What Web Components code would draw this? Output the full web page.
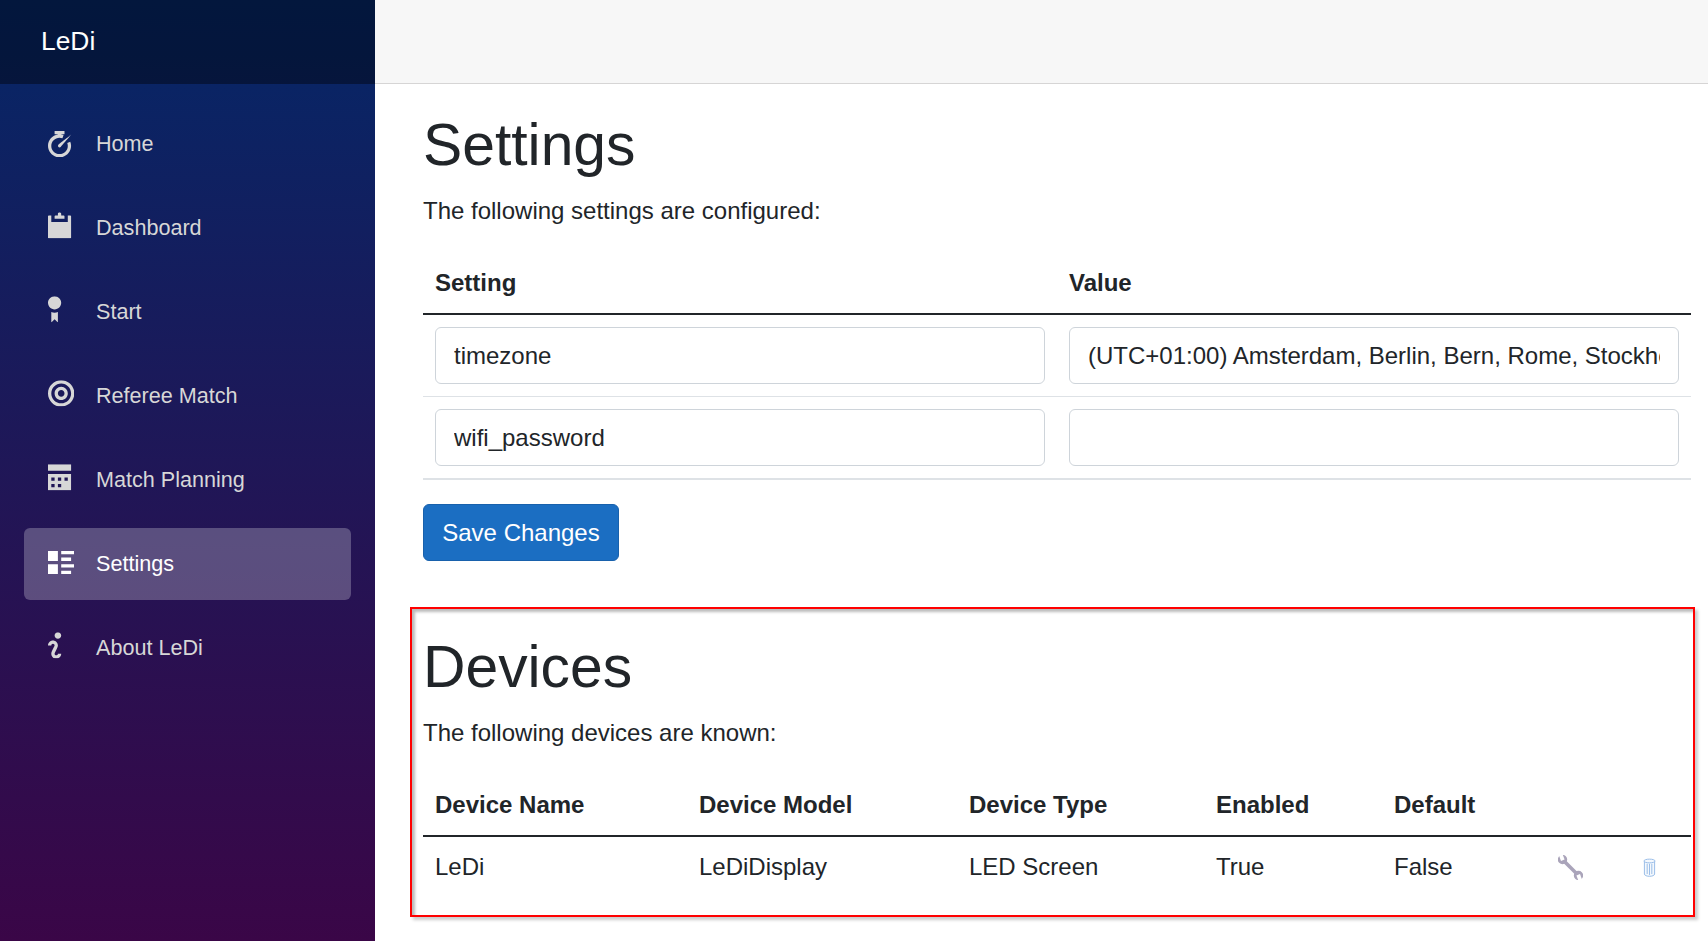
<!DOCTYPE html>
<html>
<head>
<meta charset="utf-8">
<title>LeDi</title>
<style>
    html, body { margin: 0; height: 100%; }
    body { font: 24px/1.5 "Liberation Sans", Arial, sans-serif; color: #212529; overflow: hidden; }
</style>
</head>
<body>

<app-shell>
    <nav-menu slot="nav" brand="LeDi">
        <nav-link icon="timer" low>Home</nav-link>
        <nav-link icon="clipboard">Dashboard</nav-link>
        <nav-link icon="badge">Start</nav-link>
        <nav-link icon="target">Referee Match</nav-link>
        <nav-link icon="calendar">Match Planning</nav-link>
        <nav-link icon="list" low active>Settings</nav-link>
        <nav-link icon="info">About LeDi</nav-link>
    </nav-menu>

    <page-section heading="Settings" intro="The following settings are configured:">
        <settings-table></settings-table>
        <save-button>Save Changes</save-button>
    </page-section>

    <marked-box>
        <page-section heading="Devices" intro="The following devices are known:">
            <devices-table></devices-table>
        </page-section>
    </marked-box>
</app-shell>

<script>

    const ICONS = {
        timer: 'M2 0v1h1v.03c-1.7.24-3 1.71-3 3.47 0 1.93 1.57 3.5 3.5 3.5s3.5-1.57 3.5-3.5c0-.45-.1-.87-.25-1.25l-.91.38c.11.29.16.57.16.88 0 1.39-1.11 2.5-2.5 2.5s-2.5-1.11-2.5-2.5 1.11-2.5 2.5-2.5c.3 0 .59.05.88.16l.34-.94c-.23-.08-.47-.12-.72-.16v-.06h1v-1h-3zm5 1.16s-3.65 2.81-3.84 3c-.19.2-.19.49 0 .69.19.2.49.2.69 0 .2-.2 3.16-3.69 3.16-3.69z',
        clipboard: 'M3.5 0c-.28 0-.5.22-.5.5v.5h-.75c-.14 0-.25.11-.25.25v.75h3v-.75c0-.14-.11-.25-.25-.25h-.75v-.5c0-.28-.22-.5-.5-.5zm-3.25 1c-.14 0-.25.11-.25.25v6.5c0 .14.11.25.25.25h6.5c.14 0 .25-.11.25-.25v-6.5c0-.14-.11-.25-.25-.25h-.75v2h-5v-2h-.75z',
        badge: 'M2 0c-1.1 0-2 .9-2 2s.9 2 2 2 2-.9 2-2-.9-2-2-2zm-1 4.81v3.19l1-1 1 1v-3.19c-.31.11-.65.19-1 .19s-.69-.08-1-.19z',
        target: 'M4 0c-2.2 0-4 1.8-4 4s1.8 4 4 4 4-1.8 4-4-1.8-4-4-4zm0 1c1.66 0 3 1.34 3 3s-1.34 3-3 3-3-1.34-3-3 1.34-3 3-3zm0 1c-1.1 0-2 .9-2 2s.9 2 2 2 2-.9 2-2-.9-2-2-2zm0 1c.56 0 1 .44 1 1s-.44 1-1 1-1-.44-1-1 .44-1 1-1z',
        calendar: 'M0 0v2h7v-2h-7zm0 3v4.910c0 .05.04.09.09.09h6.810c.05 0 .09-.04.09-.09v-4.910h-7zm1 1h1v1h-1v-1zm2 0h1v1h-1v-1zm2 0h1v1h-1v-1zm-4 2h1v1h-1v-1zm2 0h1v1h-1v-1z',
        list: 'M0 0v3h3v-3h-3zm4 0v1h4v-1h-4zm0 2v1h3v-1h-3zm-4 2v3h3v-3h-3zm4 0v1h4v-1h-4zm0 2v1h3v-1h-3z',
        info: 'M3 0c-.55 0-1 .45-1 1s.45 1 1 1 1-.45 1-1-.45-1-1-1zm-1.500 2.500c-.83 0-1.500.67-1.500 1.500h1c0-.28.22-.5.5-.5s.5.22.5.5-1 1.640-1 2.500c0 .86.67 1.500 1.500 1.500s1.500-.67 1.500-1.500h-1c0 .28-.22.5-.5.5s-.5-.22-.5-.5c0-.36 1-1.840 1-2.500 0-.81-.67-1.500-1.500-1.500z'
    };

    // small helper, every element below is the same few lines otherwise
    class ShadowElement extends HTMLElement {
        constructor() {
            super();
            this.attachShadow({mode: 'open'});
        }
        render(html) {
            this.shadowRoot.innerHTML = html;
        }
    }

    customElements.define('app-shell', class extends ShadowElement {
        connectedCallback() {
            this.render(`
                <style>
                    :host { display: flex; height: 100%; }
                    .side { flex: 0 0 375px; }
                    .main { flex: 1; min-width: 0; }
                    .top { height: 83px; background: #f7f7f7; border-bottom: 1px solid #d6d5d5; }
                    .content { padding: 25px 17px 0 48px; }
                </style>
                <div class="side"><slot name="nav"></slot></div>
                <div class="main">
                    <div class="top"></div>
                    <div class="content"><slot></slot></div>
                </div>`);
        }
    });

    customElements.define('nav-menu', class extends ShadowElement {
        connectedCallback() {
            this.render(`
                <style>
                    :host { display: block; height: 100%; background: linear-gradient(180deg, rgb(5, 39, 103) 0%, #3a0647 100%); }
                    .brand { height: 84px; box-sizing: border-box; padding-left: 41px; display: flex; align-items: center;
                             background: rgba(0, 0, 0, .4); color: #fff; font-size: 26.4px; }
                    .items { display: flex; flex-direction: column; gap: 12px; padding-top: 24px; }
                </style>
                <div class="brand">${this.getAttribute('brand')}</div>
                <div class="items"><slot></slot></div>`);
        }
    });

    customElements.define('nav-link', class extends ShadowElement {
        connectedCallback() {
            let path = ICONS[this.getAttribute('icon')];
            this.render(`
                <style>
                    :host { display: block; padding: 0 24px; font-size: 21.6px; }
                    a { display: flex; align-items: center; height: 72px; padding-left: 24px; border-radius: 6px;
                        color: #d7d7d7; text-decoration: none; }
                    :host([active]) a { background: rgba(255, 255, 255, .25); color: #fff; }
                    svg { width: 26.4px; height: 26.4px; margin-right: 21.6px; fill: currentColor; flex: none; transform: translateY(-2.8px); }
                    :host([low]) svg { transform: none; }
                </style>
                <a href="#"><svg viewBox="0 0 8 8"><path d="${path}"/></svg><slot></slot></a>`);
        }
    });

    customElements.define('page-section', class extends ShadowElement {
        connectedCallback() {
            this.render(`
                <style>
                    :host { display: block; }
                    h1 { margin: 0 0 12px; font-size: 58.8px; font-weight: 400; line-height: 72px; }
                    p { margin: 0 0 24px; }
                </style>
                <h1>${this.getAttribute('heading')}</h1>
                <p>${this.getAttribute('intro')}</p>
                <slot></slot>`);
        }
    });

    customElements.define('settings-table', class extends ShadowElement {
        connectedCallback() {
            let rows = [
                ['timezone', '(UTC+01:00) Amsterdam, Berlin, Bern, Rome, Stockholm, Vienna'],
                ['wifi_password', '']
            ];
            this.render(`
                <style>
                    :host { display: block; margin-bottom: 24px; }
                    .row { display: grid; grid-template-columns: 1fr 1fr; column-gap: 24px; padding: 12px; border-bottom: 1px solid #dee2e6; }
                    .row:last-child { border-bottom-width: 2px; }
                    .head { font-weight: 700; border-bottom: 2px solid #212529; }
                    input { display: block; box-sizing: border-box; width: 100%; height: 57px; padding: 9px 18px; font: inherit; color: #212529;
                            background: #fff; border: 1px solid #ced4da; border-radius: 6px; outline: none; }
                </style>
                <div class="row head"><span>Setting</span><span>Value</span></div>
                ${rows.map(r => `<div class="row"><input value="${r[0]}"><input value="${r[1]}"></div>`).join('')}`);
        }
    });

    customElements.define('save-button', class extends ShadowElement {
        connectedCallback() {
            this.render(`
                <style>
                    :host { display: block; }
                    button { display: block; width: 196px; height: 57px; padding: 0; font: inherit; color: #fff; background: #1b6ec2;
                             border: 1px solid #1861ac; border-radius: 6px; }
                </style>
                <button><slot></slot></button>`);
        }
    });

    customElements.define('marked-box', class extends ShadowElement {
        connectedCallback() {
            this.render(`
                <style>
                    :host { display: block; margin: 46px -4px 0 -13px; padding: 22px 2px 18px 11px; border: 2px solid #f00;
                            box-shadow: 3px 3px 3px #ccc, inset 3px 3px 3px #bbb; }
                </style>
                <slot></slot>`);
        }
    });

    customElements.define('devices-table', class extends ShadowElement {
        connectedCallback() {
            this.render(`
                <style>
                    :host { display: block; }
                    .row { display: grid; grid-template-columns: 264px 270px 247px 178px 164px 78px 1fr; padding: 12px; }
                    .head { font-weight: 700; border-bottom: 2px solid #212529; }
                    .body { align-items: center; }
                    svg { display: block; }
                </style>
                <div class="row head"><span>Device Name</span><span>Device Model</span><span>Device Type</span><span>Enabled</span><span>Default</span></div>
                <div class="row body">
                    <span>LeDi</span><span>LeDiDisplay</span><span>LED Screen</span><span>True</span><span>False</span>
                    <svg width="25" height="25" viewBox="0 0 25 25">
                        <g transform="translate(12.5 12.5) rotate(45)" fill="#aaa4ba">
                            <rect x="-11" y="-1.800" width="22" height="3.600"/>
                            <circle cx="-11.300" cy="0" r="4.700"/>
                            <circle cx="11.300" cy="0" r="4.700"/>
                            <rect x="-18" y="-1.900" width="7.500" height="3.800" fill="#fff" transform="rotate(25 -11.300 0)"/>
                            <rect x="10.500" y="-1.900" width="7.500" height="3.800" fill="#fff" transform="rotate(25 11.300 0)"/>
                        </g>
                    </svg>
                    <svg width="13" height="19" viewBox="0 0 14 20" style="margin-left:7px"><g fill="#f4f8fd" stroke="#93b9e6"><path d="M1.500 3v14c0 1.500 2.500 2.500 5.500 2.500s5.500-1 5.500-2.500V3"/><ellipse cx="7" cy="3" rx="6" ry="2"/><path d="M4.500 6v11M7 6v12M9.500 6v11" fill="none"/></g></svg>
                </div>`);
        }
    });

</script>
</body>
</html>
